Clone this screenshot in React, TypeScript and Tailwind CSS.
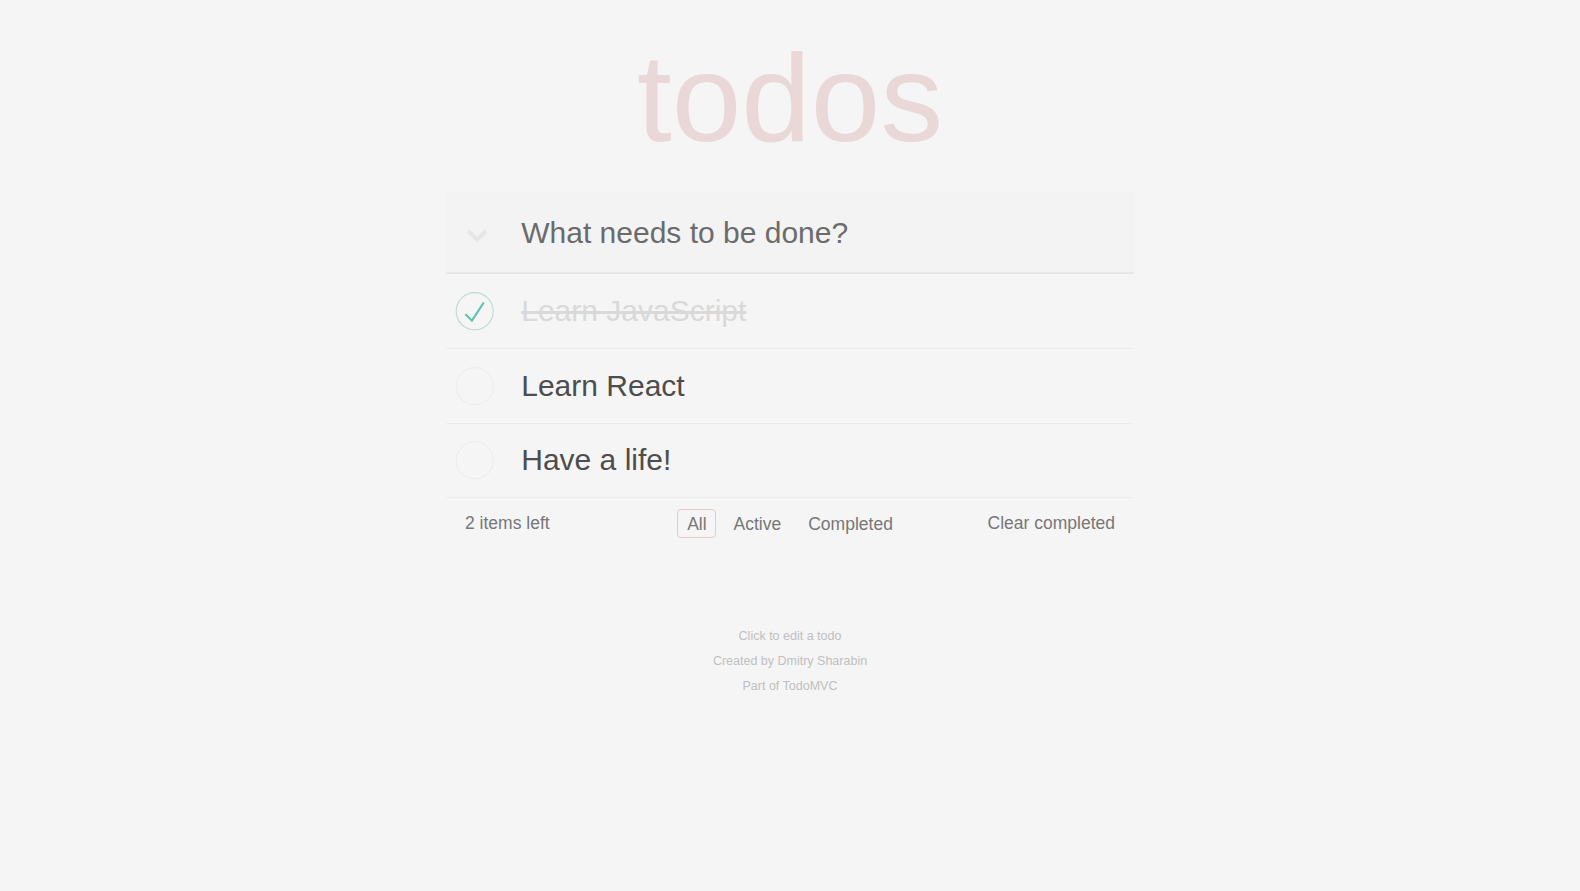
const todos = [
  { id: 1, text: 'Learn JavaScript', completed: true },
  { id: 2, text: 'Learn React', completed: false },
  { id: 3, text: 'Have a life!', completed: false },
];

function Toggle({ checked }: { checked: boolean }) {
  return (
    <svg className="w-[50px] h-[50px] shrink-0" viewBox="-10 -18 100 135">
      <circle cx="50" cy="50" r="50" fill="none" stroke={checked ? '#bddad5' : '#ededed'} strokeWidth="3" />
      {checked && <path fill="#5dc2af" d="M72 25L42 71 27 56l-4 4 20 20 34-52z" />}
    </svg>
  );
}

export default function App() {
  const filters = ['All', 'Active', 'Completed'];

  return (
    <div className="min-h-screen bg-[#f5f5f5] text-[#4d4d4d] font-['Liberation_Sans',Arial,sans-serif] pt-[35px]">
      <div className="w-[687.5px] mx-auto">
        <h1 className="text-center text-[125px] leading-[125px] font-normal text-[#ead7d7]">todos</h1>

        <section className="mt-[32px]">
          {/* New todo */}
          <header className="h-[82px] flex items-center bg-[#f3f3f3] shadow-[inset_0_-2px_1px_rgba(0,0,0,0.05)]">
            <div className="w-[75px] pl-[20px] mt-[4px] shrink-0">
              <svg width="22" height="13" viewBox="0 0 22 13">
                <path d="M2 2l9 8.5 9-8.5" fill="none" stroke="#e6e6e6" strokeWidth="4" strokeLinejoin="miter" />
              </svg>
            </div>
            <span className="text-[30px] leading-[42px] text-[#6b6b6b]">What needs to be done?</span>
          </header>

          {/* List */}
          <ul>
            {todos.map((todo) => (
              <li key={todo.id} className="h-[74.75px] flex items-center border-b border-[#ededed]">
                <Toggle checked={todo.completed} />
                <span
                  className={
                    todo.completed
                      ? 'ml-[25px] text-[30px] leading-[36px] text-[#d9d9d9] line-through'
                      : 'ml-[25px] text-[30px] leading-[36px] text-[#4d4d4d]'
                  }
                >
                  {todo.text}
                </span>
              </li>
            ))}
          </ul>

          {/* Footer */}
          <footer className="grid grid-cols-[1fr_auto_1fr] items-center px-[18.75px] pt-[13px] pb-[12px] text-[17.5px] text-[#777777]">
            <span className="leading-[25px]">2 items left</span>
            <ul className="flex items-center h-[25px]">
              {filters.map((f) => (
                <li key={f}>
                  <a
                    className={
                      f === 'All'
                        ? 'mx-[3.75px] h-[29px] px-[8.75px] flex items-center border border-[#e8c9c9] rounded-[4px]'
                        : 'mx-[3.75px] h-[29px] px-[8.75px] flex items-center border border-transparent rounded-[4px]'
                    }
                  >
                    {f}
                  </a>
                </li>
              ))}
            </ul>
            <span className="justify-self-end leading-[25px]">Clear completed</span>
          </footer>
        </section>

        {/* Info */}
        <div className="mt-[82px] flex flex-col items-center gap-[12.2px] text-[12.5px] leading-[12.5px] text-[#bfbfbf]">
          <p>Click to edit a todo</p>
          <p>Created by Dmitry Sharabin</p>
          <p>Part of TodoMVC</p>
        </div>
      </div>
    </div>
  );
}
